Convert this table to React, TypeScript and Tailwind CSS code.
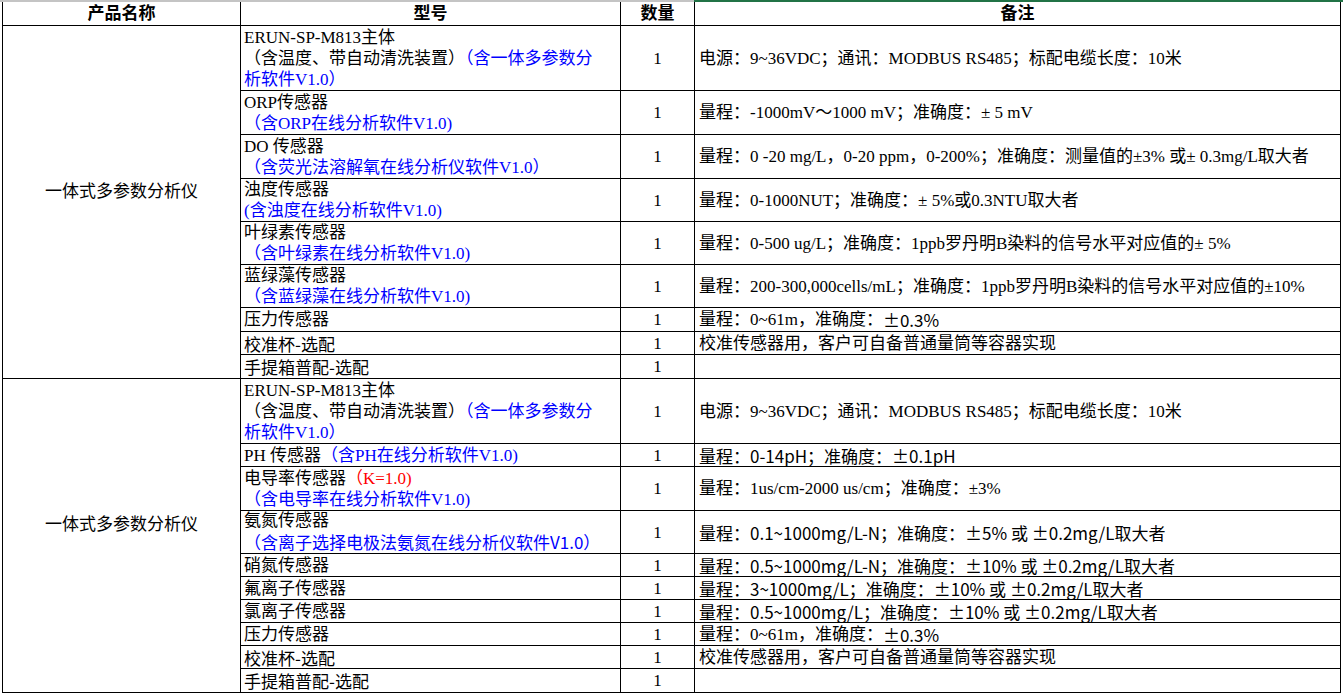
import React from 'react'

type Row = {
  h: string
  model: React.ReactNode
  note: React.ReactNode
}

const Blue = ({ children }: { children: React.ReactNode }) => (
  <span className="text-[#0000ff]">{children}</span>
)

const Red = ({ children }: { children: React.ReactNode }) => (
  <span className="text-[#ff0000]">{children}</span>
)

// narrow "song" style latin used by some cells
const Sim = ({ children }: { children: React.ReactNode }) => (
  <span className="font-['Noto_Sans_CJK_SC',sans-serif]">{children}</span>
)

const mainBody: Row = {
  h: 'h-[65px]',
  model: (
    <>
      <div>ERUN-SP-M813主体</div>
      <div>
        （含温度、带自动清洗装置）<Blue>（含一体多参数分</Blue>
      </div>
      <div>
        <Blue>析软件V1.0）</Blue>
      </div>
    </>
  ),
  note: '电源：9~36VDC；通讯：MODBUS RS485；标配电缆长度：10米',
}

const group1: Row[] = [
  mainBody,
  {
    h: 'h-[44px]',
    model: (
      <>
        <div>ORP传感器</div>
        <div><Blue>（含ORP在线分析软件V1.0)</Blue></div>
      </>
    ),
    note: '量程：-1000mV～1000 mV；准确度：± 5 mV',
  },
  {
    h: 'h-[44px]',
    model: (
      <>
        <div>DO 传感器</div>
        <div><Blue>（含荧光法溶解氧在线分析仪软件V1.0）</Blue></div>
      </>
    ),
    note: '量程：0 -20 mg/L，0-20 ppm，0-200%；准确度：测量值的±3% 或± 0.3mg/L取大者',
  },
  {
    h: 'h-[43px]',
    model: (
      <>
        <div>浊度传感器</div>
        <div><Blue>(含浊度在线分析软件V1.0)</Blue></div>
      </>
    ),
    note: '量程：0-1000NUT；准确度：± 5%或0.3NTU取大者',
  },
  {
    h: 'h-[43px]',
    model: (
      <>
        <div>叶绿素传感器</div>
        <div><Blue>（含叶绿素在线分析软件V1.0)</Blue></div>
      </>
    ),
    note: '量程：0-500 ug/L；准确度：1ppb罗丹明B染料的信号水平对应值的± 5%',
  },
  {
    h: 'h-[43px]',
    model: (
      <>
        <div>蓝绿藻传感器</div>
        <div><Blue>（含蓝绿藻在线分析软件V1.0)</Blue></div>
      </>
    ),
    note: '量程：200-300,000cells/mL；准确度：1ppb罗丹明B染料的信号水平对应值的±10%',
  },
  { h: 'h-[24px]', model: '压力传感器', note: <>量程：0~61m，准确度：<Sim>±0.3%</Sim></> },
  { h: 'h-[23px]', model: <Sim>校准杯-选配</Sim>, note: '校准传感器用，客户可自备普通量筒等容器实现' },
  { h: 'h-[24px]', model: <Sim>手提箱普配-选配</Sim>, note: '' },
]

const group2: Row[] = [
  mainBody,
  {
    h: 'h-[23px]',
    model: (
      <div>
        PH 传感器<Blue>（含PH在线分析软件V1.0)</Blue>
      </div>
    ),
    note: <Sim>量程：0-14pH；准确度：±0.1pH</Sim>,
  },
  {
    h: 'h-[44px]',
    model: (
      <>
        <div>
          电导率传感器<Red>（K=1.0)</Red>
        </div>
        <div><Blue>（含电导率在线分析软件V1.0)</Blue></div>
      </>
    ),
    note: '量程：1us/cm-2000 us/cm；准确度：±3%',
  },
  {
    h: 'h-[43px]',
    model: (
      <>
        <div>氨氮传感器</div>
        <div>
          <Blue><Sim>（含离子选择电极法氨氮在线分析仪软件V1.0）</Sim></Blue>
        </div>
      </>
    ),
    note: <Sim>量程：0.1~1000mg/L-N；准确度：±5% 或 ±0.2mg/L取大者</Sim>,
  },
  { h: 'h-[23px]', model: '硝氮传感器', note: <Sim>量程：0.5~1000mg/L-N；准确度：±10% 或 ±0.2mg/L取大者</Sim> },
  { h: 'h-[23px]', model: '氟离子传感器', note: <Sim>量程：3~1000mg/L；准确度：±10% 或 ±0.2mg/L取大者</Sim> },
  { h: 'h-[23px]', model: '氯离子传感器', note: <Sim>量程：0.5~1000mg/L；准确度：±10% 或 ±0.2mg/L取大者</Sim> },
  { h: 'h-[23px]', model: '压力传感器', note: <>量程：0~61m，准确度：<Sim>±0.3%</Sim></> },
  { h: 'h-[23px]', model: <Sim>校准杯-选配</Sim>, note: '校准传感器用，客户可自备普通量筒等容器实现' },
  { h: 'h-[24px]', model: <Sim>手提箱普配-选配</Sim>, note: '' },
]

function Group({ rows }: { rows: Row[] }) {
  return (
    <div className="flex">
      {/* merged product name cell */}
      <div className="w-[238px] shrink-0 border-r border-b border-black flex items-center justify-center pb-[22px]">
        一体式多参数分析仪
      </div>
      <div className="flex flex-col">
        {rows.map((r, i) => (
          <div key={i} className={`flex ${r.h}`}>
            <div className="w-[380px] shrink-0 border-r border-b border-black pl-[3px] flex flex-col justify-center whitespace-nowrap overflow-hidden">
              {r.model}
            </div>
            <div className="w-[74px] shrink-0 border-r border-b border-black flex items-center justify-center">
              1
            </div>
            <div className="w-[646px] shrink-0 border-r border-b border-black pl-[4px] flex items-center whitespace-nowrap overflow-hidden">
              {r.note}
            </div>
          </div>
        ))}
      </div>
    </div>
  )
}

export default function App() {
  return (
    <div className="w-[1343px] h-[695px] bg-white overflow-hidden font-['Liberation_Serif','Noto_Sans_CJK_SC',serif] text-[17px] leading-[21px] text-black">
      {/* gridline of the row above, with selected-cell border */}
      <div className="flex h-[2px]">
        <div className="w-[694px] bg-[#c4c4c4]" />
        <div className="flex-1 bg-[#217346]" />
      </div>

      <div className="ml-[2px] w-[1339px] border-l border-black">
        {/* header */}
        <div className="flex h-[24px] font-bold">
          <div className="w-[238px] border-r border-b border-black flex items-center justify-center">产品名称</div>
          <div className="w-[380px] border-r border-b border-black flex items-center justify-center">型号</div>
          <div className="w-[74px] border-r border-b border-black flex items-center justify-center">数量</div>
          <div className="w-[646px] border-r border-b border-black flex items-center justify-center">备注</div>
        </div>

        <Group rows={group1} />
        <Group rows={group2} />
      </div>
    </div>
  )
}
